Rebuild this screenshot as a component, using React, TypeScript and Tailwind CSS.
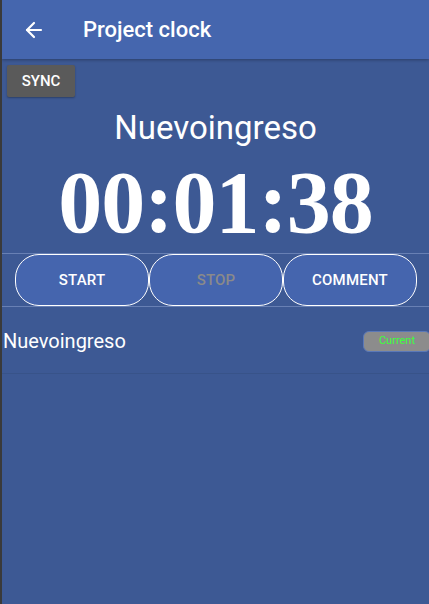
import { ArrowLeft } from 'lucide-react'

const ActionButton = ({ label, disabled }: { label: string; disabled?: boolean }) => (
  <button
    className={
      'flex-1 h-[52px] rounded-[24px] border border-white bg-[#4565ae] text-[15px] font-medium tracking-[0.2px] ' +
      (disabled ? 'text-[#8a8a8a]' : 'text-white')
    }
  >
    {label}
  </button>
)

export default function App() {
  return (
    <div
      className="w-[429px] h-[604px] flex flex-col bg-[#3d5994] border-l-2 border-l-[#3a3a3a] overflow-hidden text-white"
      style={{ fontFamily: 'Roboto, "Noto Sans", sans-serif' }}
    >
      <header className="h-[59px] shrink-0 flex items-center bg-[#4566ae] shadow-[0_1px_3px_rgba(0,0,0,0.3)] relative z-10">
        <ArrowLeft className="ml-[20px] w-[24px] h-[24px]" strokeWidth={2.2} />
        <span className="ml-[37px] text-[22px] font-medium">Project clock</span>
      </header>

      <div className="pl-[5px] pt-[6px]">
        <button className="h-[32px] w-[68px] rounded-[2px] bg-[#5a5a5a] text-[15px] font-medium text-white shadow-[0_1px_2px_rgba(0,0,0,0.3)]">
          SYNC
        </button>
      </div>

      <div className="mt-[13px] text-center text-[33px] leading-[36px]">Nuevoingreso</div>

      <div
        className="mt-[13px] text-center text-[88px] leading-[88px] font-bold tracking-[-1px]"
        style={{ fontFamily: '"Liberation Serif", "DejaVu Serif", serif' }}
      >
        00:01:38
      </div>

      <div className="mt-[6px] flex pl-[13px] pr-[12px] border-y border-[#6880b4]">
        <ActionButton label="START" />
        <ActionButton label="STOP" disabled />
        <ActionButton label="COMMENT" />
      </div>

      <div className="h-[67px] pt-[2px] flex items-center justify-between pl-[1px] border-b border-[#385389]">
        <span className="text-[20px]">Nuevoingreso</span>
        <span className="h-[21px] w-[68px] -mr-[2px] flex items-center justify-center rounded-[6px] bg-[#8c8c8c] text-[11px] text-[#3cff3c] border border-[#5a78b8]">
          Current
        </span>
      </div>
    </div>
  )
}
